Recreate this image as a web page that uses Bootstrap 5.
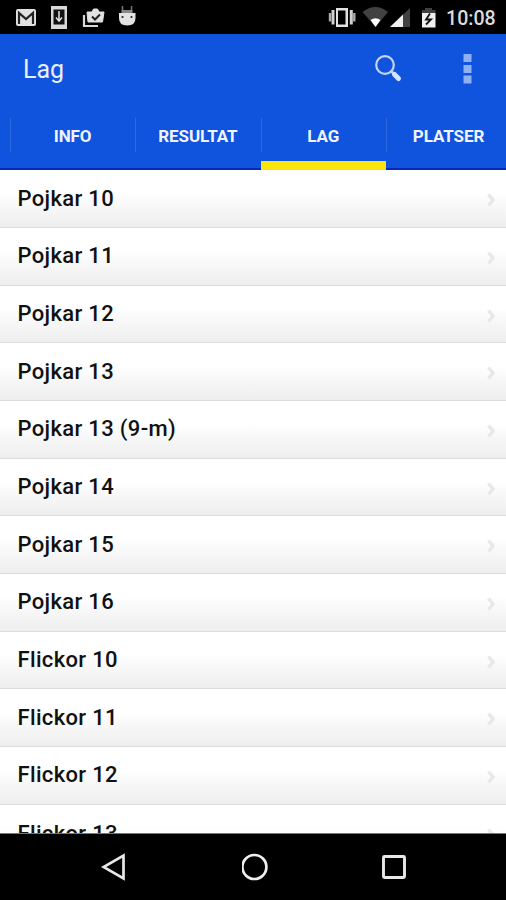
<!DOCTYPE html>
<html lang="sv">
<head>
<meta charset="utf-8">
<meta name="viewport" content="width=device-width, initial-scale=1">
<title>Lag</title>
<link href="https://cdn.jsdelivr.net/npm/bootstrap@5.3.0/dist/css/bootstrap.min.css" rel="stylesheet">
<style>
body{font-family:Roboto,"Liberation Sans",sans-serif;height:900px}
svg{display:block;flex:none}
.status{height:34px;background:#000;padding:0 9px 0 15px}
.clock{font-size:19.6px;line-height:34px;padding-top:2px;height:34px;font-weight:500;color:#dcdcdc;width:51px;margin-left:8px;white-space:nowrap}
.appbar{background:#1053dc;height:70px;padding:1px 34px 0 23px}
.title{font-size:25px;font-weight:400;line-height:69px;color:#e9efff}
.tabs{background:#1053dc;height:66px;box-shadow:inset 0 -2px #0628b8;padding-left:10px;overflow:hidden}
.tabs .nav-link{flex:0 0 125.3px;height:66px;padding:0;position:relative;color:#f0f3ff;font-size:17px;font-weight:700;line-height:65px;text-align:center;letter-spacing:-.1px}
.tabs .nav-link::before{content:"";position:absolute;left:0;top:14px;width:1px;height:34px;background:#2f69e0}
.tabs .nav-link.active::after{content:"";position:absolute;left:0;right:0;bottom:0;height:9px;background:#fbe50a}
.rows .list-group-item{height:57.68px;flex:none;border:0;border-bottom:1.5px solid #dcdcdc;padding:0 9.5px 0 17.5px;color:#111;font-size:22px;font-weight:500;line-height:56px;letter-spacing:.34px;background:linear-gradient(#fff 40%,#f7f7f7 65%,#eee)}
.rows{padding-top:.4px}
.rows svg{margin-top:3px}
.navkeys{height:67px;background:#000;border-top:1px solid #777;padding-left:101px;gap:114.5px}
</style>
<script src="https://cdn.jsdelivr.net/npm/bootstrap@5.3.0/dist/js/bootstrap.bundle.min.js"></script>
</head>
<body class="d-flex flex-column overflow-hidden bg-white m-0">
<div class="status d-flex align-items-center flex-shrink-0">
  <svg width="125" height="34" viewBox="15 0 125 34">
    <rect x="16" y="9" width="20" height="17" rx="2" fill="#e2e2e2"/>
    <path d="M19 24V13l7 6 7-6v11" fill="none" stroke="#222" stroke-width="2.2"/>
    <path d="M51 6h16v23H51z" fill="#d8d8d8"/><path d="M53.500 9.500h11v15h-11z" fill="#111"/>
    <path d="M59 11v9M56 17.500l3 3.500 3-3.500" fill="none" stroke="#e2e2e2" stroke-width="1.500"/>
    <path d="M84 15v11h14" fill="none" stroke="#d8d8d8" stroke-width="2.200"/>
    <path d="M87 12h17l-1.500 10H88z" fill="#e2e2e2" stroke="#e2e2e2" stroke-width="1"/>
    <path d="M92 12l1.500-3h4l1.500 3" fill="#e2e2e2" stroke="#e2e2e2" stroke-width="1"/>
    <path d="M92 16.500l3 3 5-5" fill="none" stroke="#222" stroke-width="2"/>
    <path d="M122.500 6v5M131.500 6v5" stroke="#777" stroke-width="1.500"/>
    <path d="M121.500 10h11v3h-11z" fill="#888"/>
    <path d="M119 13h16.500v5q0 7.500-8.300 7.500T119 18z" fill="#e2e2e2"/>
    <circle cx="122.500" cy="17" r="1.100" fill="#222"/><circle cx="131.500" cy="17" r="1.100" fill="#222"/>
  </svg>
  <svg class="ms-auto" width="110" height="34" viewBox="328 0 110 34">
    <path d="M336 8h12v19h-12z" fill="#e2e2e2"/><path d="M338 10.500h7.500v14H338z" fill="#000"/>
    <path d="M333 10v14.500M351.300 10v14.500" stroke="#d0d0d0" stroke-width="3"/><path d="M330 13v8.500M354.300 13v8.500" stroke="#aaa" stroke-width="2.400"/>
    <path d="M362.500 12q13-10 25.500 0L375.500 27z" fill="#414141"/><path d="M370.500 20q5-3.500 10 0l-5 7z" fill="#fff"/>
    <path d="M410 8v19h-20z" fill="#414141"/><path d="M403 14.500V27h-13z" fill="#f0f0f0"/>
    <path d="M422 13v-3h3V8h7v2h3.500v3z" fill="#414141"/><path d="M422 13h13.500v14.500H422z" fill="#f0f0f0"/>
    <path d="M430 13.500l-4 6h5l-5 5" fill="none" stroke="#111" stroke-width="1.800"/>
  </svg>
  <div class="clock">10:08</div>
</div>
<header class="appbar d-flex align-items-center flex-shrink-0">
  <div class="title me-auto">Lag</div>
  <svg width="98" height="34" viewBox="374 52 98 34">
    <circle cx="385" cy="64" r="8.800" fill="none" stroke="#c3d5fa" stroke-width="2.200"/>
    <path d="M391 70l3.500 3.500" stroke="#c3d5fa" stroke-width="2.500"/><path d="M394.500 73.500l4 4" stroke="#d9e5ff" stroke-width="5" stroke-linecap="round"/>
    <path d="M463.500 53h8v8h-8zM463.500 64h8v8h-8zM463.500 74.500h8v8h-8z" fill="#8fb0f2"/>
  </svg>
</header>
<nav class="tabs nav flex-nowrap flex-shrink-0">
  <a class="nav-link">INFO</a><a class="nav-link">RESULTAT</a><a class="nav-link active">LAG</a><a class="nav-link">PLATSER</a>
</nav>
<main class="rows list-group list-group-flush flex-grow-1 overflow-hidden" id="teams"></main>
<footer class="navkeys d-flex align-items-center flex-shrink-0">
  <svg width="26" height="30"><path d="M22.500 3.500v23L2.500 15z" fill="none" stroke="#e8e8e8" stroke-width="2.700"/></svg>
  <svg width="26" height="30" viewBox="-1 0 26 30"><circle cx="11" cy="15" r="12" fill="none" stroke="#eee" stroke-width="2.700" transform="translate(.4 0)"/></svg>
  <svg width="26" height="30"><rect x="1.500" y="4.500" width="21" height="21" rx="1" fill="none" stroke="#e8e8e8" stroke-width="2.900"/></svg>
</footer>
<script>
const teams=["Pojkar 10","Pojkar 11","Pojkar 12","Pojkar 13","Pojkar 13 (9-m)","Pojkar 14","Pojkar 15","Pojkar 16","Flickor 10","Flickor 11","Flickor 12","Flickor 13"];
document.getElementById("teams").innerHTML=teams.map(t=>`<div class="list-group-item d-flex align-items-center justify-content-between"><span>${t}</span><svg width="11" height="16"><path d="M2.500 2.500l4.500 5.500-4.500 5.500" fill="none" stroke="#e8e8e8" stroke-width="3.500"/></svg></div>`).join("");
</script>
</body>
</html>
